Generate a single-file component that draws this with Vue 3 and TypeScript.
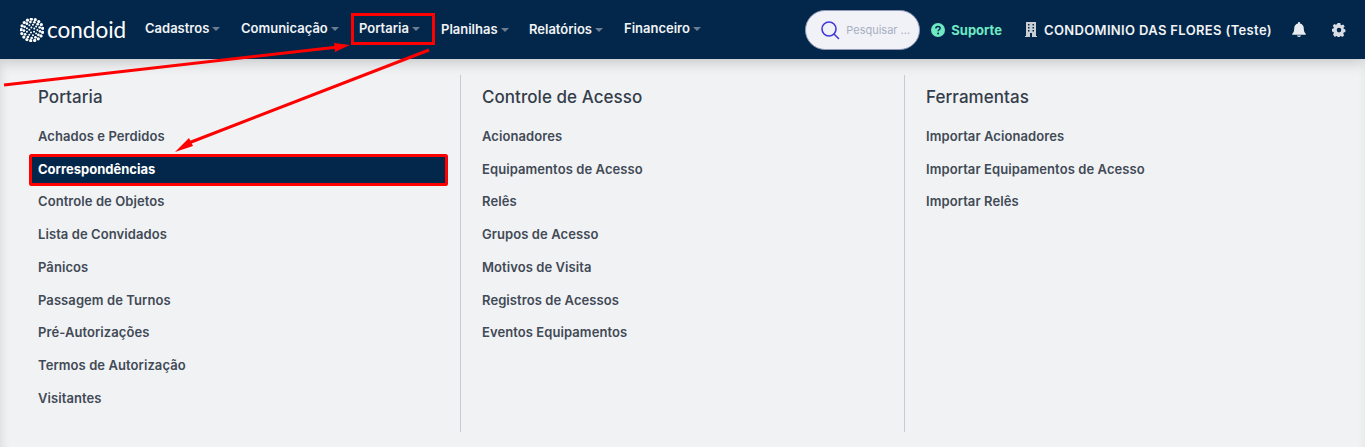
<script setup lang="ts">
const navItems = [
  { label: 'Cadastros', width: 96, raised: true },
  { label: 'Comunicação', width: 118, raised: true },
  { label: 'Portaria', width: 82, raised: true },
  { label: 'Planilhas', width: 88, raised: false },
  { label: 'Relatórios', width: 95, raised: false },
  { label: 'Financeiro', width: 90, raised: true },
];

const columns = [
  {
    title: 'Portaria',
    links: [
      'Achados e Perdidos',
      'Correspondências',
      'Controle de Objetos',
      'Lista de Convidados',
      'Pânicos',
      'Passagem de Turnos',
      'Pré-Autorizações',
      'Termos de Autorização',
      'Visitantes',
    ],
  },
  {
    title: 'Controle de Acesso',
    links: [
      'Acionadores',
      'Equipamentos de Acesso',
      'Relês',
      'Grupos de Acesso',
      'Motivos de Visita',
      'Registros de Acessos',
      'Eventos Equipamentos',
    ],
  },
  {
    title: 'Ferramentas',
    links: ['Importar Acionadores', 'Importar Equipamentos de Acesso', 'Importar Relês'],
  },
];

// scattered blobs of the round logo mark
const logoDots: { x: number; y: number; r: number }[] = [];
for (let ring = 1; ring <= 4; ring++) {
  const count = ring * 4 + 1;
  for (let i = 0; i < count; i++) {
    const angle = (i / count) * Math.PI * 2 + ring * 0.7;
    logoDots.push({
      x: 12 + Math.cos(angle) * ring * 2.7,
      y: 12 + Math.sin(angle) * ring * 2.7,
      r: ring === 4 ? 1.6 : ring === 3 ? 1.35 : 1,
    });
  }
}
</script>

<template>
  <div class="page">
    <header class="navbar">
      <div class="brand">
        <svg class="brand-mark" width="24" height="24" viewBox="0 0 24 24">
          <circle v-for="(d, i) in logoDots" :key="i" :cx="d.x" :cy="d.y" :r="d.r" fill="#fff" />
        </svg>
        <span class="brand-name">condoid</span>
      </div>
      <nav class="nav">
        <a
          v-for="item in navItems"
          :key="item.label"
          class="nav-item"
          :class="{ raised: item.raised }"
          :style="{ width: item.width + 'px' }"
        >
          {{ item.label }}<i class="caret"></i>
        </a>
      </nav>
      <div class="nav-right">
        <div class="search">
          <svg width="20" height="20" viewBox="0 0 20 20" fill="none" stroke="#4338d8" stroke-width="1.6">
            <circle cx="9" cy="9" r="7" />
            <path d="M14 14l4.500 4.500" stroke-linecap="round" />
          </svg>
          <span>Pesquisar ...</span>
        </div>
        <div class="support">
          <svg width="14" height="14" viewBox="0 0 14 14">
            <circle cx="7" cy="7" r="7" fill="#6fe8c4" />
            <path d="M4.900 5.400c0-1.200 1-1.900 2.100-1.900s2.100.7 2.100 1.800c0 1.500-2 1.400-2 2.900" fill="none" stroke="#03274b" stroke-width="1.500" />
            <circle cx="7.100" cy="10.500" r="1" fill="#03274b" />
          </svg>
          <span>Suporte</span>
        </div>
        <div class="condo">
          <svg width="12" height="15" viewBox="0 0 12 15">
            <path fill-rule="evenodd" fill="#c9ced4" d="M1 0h10v14h1v1H0v-1h1zM3 2v1.500h1.500V2zm4.500 0v1.500H9V2zM3 5v1.500h1.500V5zm4.500 0v1.500H9V5zM3 8v1.500h1.500V8zm4.500 0v1.500H9V8zM5 11v4h2v-4z" />
          </svg>
          <span>CONDOMINIO DAS FLORES (Teste)</span>
        </div>
        <svg class="bell" width="14" height="15" viewBox="0 0 14 15">
          <path fill="#e8ebef" d="M7 0c.6 0 1 .4 1 1v.6c2.300.5 3.800 2.400 3.800 4.800 0 3.400 1 4.300 2 5.300.300.400 0 1-.5 1H.7c-.5 0-.8-.6-.5-1 1-1 2-1.900 2-5.300 0-2.400 1.500-4.300 3.800-4.800V1c0-.6.400-1 1-1zM5 13.600h4c0 .8-.9 1.400-2 1.400s-2-.6-2-1.400z" />
        </svg>
        <svg class="gear" width="14" height="14" viewBox="0 0 14 14">
          <path fill="#d9dde3" fill-rule="evenodd" d="M5.700 0h2.600l.3 1.800 1 .5 1.600-.9 1.500 2-1.200 1.300.2 1.100 1.700.7v2.500l-1.700.6-.4 1.100.9 1.500-1.800 1.700-1.500-1-1 .4-.4 1.700H5.700l-.4-1.700-1-.4-1.500 1L1 11.600l.9-1.500-.4-1.100L0 8.500V6l1.700-.7.200-1.100L.7 2.900l1.500-2 1.600.9 1-.5zM7 4.800a2.300 2.300 0 1 0 0 4.600 2.300 2.300 0 0 0 0-4.600z" />
        </svg>
      </div>
    </header>

    <main class="menu">
      <section v-for="col in columns" :key="col.title" class="column">
        <h3>{{ col.title }}</h3>
        <a
          v-for="link in col.links"
          :key="link"
          class="link"
          :class="{ active: link === 'Correspondências' }"
        >{{ link }}</a>
      </section>
    </main>

    <svg class="marks" width="1365" height="447" viewBox="0 0 1365 447">
      <rect x="352.500" y="14.500" width="81" height="29" fill="none" stroke="#f00" stroke-width="3" />
      <rect x="30.500" y="155.500" width="416" height="29" rx="1" fill="none" stroke="#f00" stroke-width="3" />
      <g stroke="#f00" stroke-width="3" fill="#f00">
        <path d="M4 85L338 47" fill="none" />
        <path d="M350 45L334 43l1 9z" stroke="none" />
        <path d="M429 50L186 144" fill="none" />
        <path d="M175 152L189 138l4 8z" stroke="none" />
      </g>
    </svg>
  </div>
</template>

<style>
html,
body {
  margin: 0;
  background: #f1f2f4;
}
</style>

<style scoped>
.page {
  position: relative;
  width: 1365px;
  height: 447px;
  overflow: hidden;
  background: #f1f2f4;
  font-family: Inter, 'Open Sans', sans-serif;
}

.navbar {
  position: relative;
  display: flex;
  align-items: center;
  height: 59px;
  padding: 0 19px 0 20px;
  box-sizing: border-box;
  background: #03274b;
  box-shadow: 0 2px 14px rgba(0, 0, 0, 0.22);
}

.brand {
  display: flex;
  align-items: center;
  gap: 3px;
  width: 125px;
  color: #fff;
}

.brand-name {
  font-family: Lato, sans-serif;
  font-size: 22.500px;
  font-weight: 400;
}

.nav {
  display: flex;
}

.nav-item {
  display: flex;
  align-items: center;
  box-sizing: border-box;
  padding-bottom: 1px;
  color: #f1f3f5;
  font-size: 13px;
  font-weight: 600;
  white-space: nowrap;
}

.nav-item.raised {
  padding-bottom: 3px;
}

.caret {
  display: inline-block;
  margin-left: 3px;
  margin-top: 2px;
  border-left: 4.500px solid transparent;
  border-right: 4.500px solid transparent;
  border-top: 4px solid #6a7d92;
}

.nav-right {
  display: flex;
  align-items: center;
  margin-left: auto;
}

.search {
  display: flex;
  align-items: center;
  gap: 6px;
  box-sizing: border-box;
  width: 115px;
  height: 40px;
  padding-left: 14px;
  border-radius: 20px;
  background: #f0f2f8;
  border: 1px solid #8f97b5;
  color: #a9afc0;
  font-size: 11px;
  white-space: nowrap;
}

.support {
  display: flex;
  align-items: center;
  gap: 6px;
  margin-left: 11px;
  color: #6fe8c4;
  font-size: 13px;
  font-weight: 700;
}

.condo {
  display: flex;
  align-items: center;
  gap: 7px;
  margin-left: 23px;
  color: #f1f3f5;
  font-size: 13px;
  font-weight: 600;
  letter-spacing: 0.35px;
  white-space: nowrap;
}

.bell {
  margin-left: 20px;
}

.gear {
  margin-left: 26px;
}

.menu {
  display: grid;
  grid-template-columns: 445px 444px 444px;
  height: 388px;
  box-sizing: border-box;
  padding: 16px 0 0 16px;
  box-shadow: inset 10px 0 10px -8px rgba(0, 0, 0, 0.09), inset -8px 0 10px -8px rgba(0, 0, 0, 0.06);
}

.column {
  display: flex;
  flex-direction: column;
  gap: 5.750px;
  height: 357px;
  box-sizing: border-box;
  padding: 0 13px 0 14px;
  border-right: 1px solid #c8ccd1;
}

.column:first-child {
  padding-left: 15px;
}

.column:last-child {
  border-right: none;
}

h3 {
  margin: 12px 0 10px 7px;
  color: #343d4a;
  font-size: 17px;
  font-weight: 500;
  letter-spacing: 0.05px;
  line-height: 20px;
}

.link {
  height: 27px;
  line-height: 27px;
  padding-left: 7px;
  color: #414a56;
  font-size: 13px;
  font-weight: 600;
  letter-spacing: 0.08px;
  white-space: nowrap;
}

.link.active {
  background: #03274b;
  color: #fff;
  font-weight: 700;
  letter-spacing: 0;
}

.marks {
  position: absolute;
  left: 0;
  top: 0;
  pointer-events: none;
}
</style>
